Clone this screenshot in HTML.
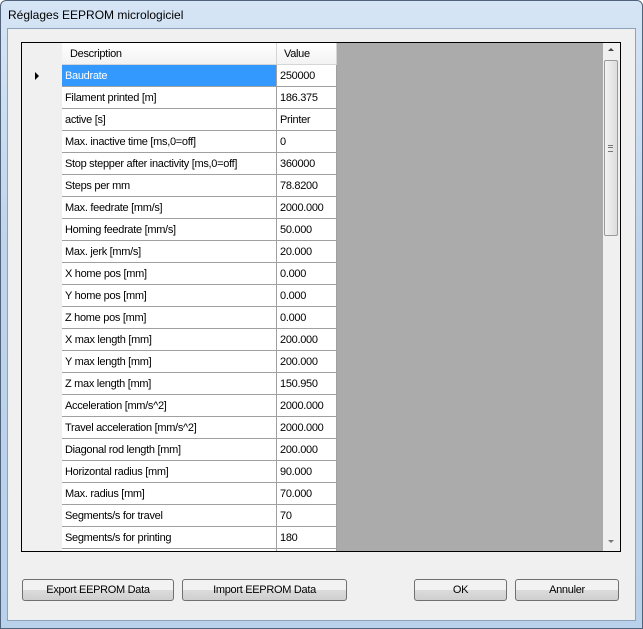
<!DOCTYPE html><html><head><style>
body{margin:0;width:643px;height:629px;overflow:hidden;font-family:"Liberation Sans",sans-serif;font-size:11px;letter-spacing:-0.3px;}
.frame{position:absolute;left:0;top:0;width:641px;height:627px;border:1px solid #50637a;border-radius:6px 6px 0 0;background:linear-gradient(#d6e5f5,#bed4ec 40%,#b9d1eb);}
.title{position:absolute;left:8px;top:8px;font-size:12px;color:#000;letter-spacing:0}
.client{position:absolute;left:7px;top:28px;width:627px;height:591px;background:#f0f0f0;border:1px solid #8da2bb;}
.grid{position:absolute;left:21px;top:42px;width:598px;height:508px;border:1px solid #000;background:#ababab;overflow:hidden}
.rh{position:absolute;left:0;width:40px;height:22px;background:#f0f0f0;border-right:1px solid #d0d0d0;}
.c1{position:absolute;left:40px;height:22px;background:#fff;border-right:1px solid #a0a0a0;border-bottom:1px solid #a0a0a0;line-height:23px;padding-left:3px;box-sizing:border-box;width:215px}
.c2{position:absolute;left:255px;width:60px;height:22px;background:#fff;border-right:1px solid #a0a0a0;border-bottom:1px solid #a0a0a0;line-height:23px;padding-left:3px;box-sizing:border-box}
.sb{position:absolute;left:581px;top:0;width:17px;height:508px;background:#f0f0f0;}
.btn{position:absolute;height:20px;border:1px solid #707070;border-radius:3px;background:linear-gradient(#f2f2f2 50%,#dcdcdc 50%,#cfcfcf);text-align:center;line-height:20px;font-size:11px}
</style></head><body>
<div class="frame"></div>
<div class="title">Réglages EEPROM micrologiciel</div>
<div class="client"></div>
<div class="grid">
<div style="position:absolute;left:0;top:0;width:40px;height:22px;background:#f0f0f0;border-right:1px solid #d0d0d0"></div>
<div style="position:absolute;left:40px;top:0;width:215px;height:22px;background:linear-gradient(#fff,#f3f3f3);border-right:1px solid #d5d5d5;border-bottom:1px solid #d5d5d5;line-height:22px;padding-left:8px;box-sizing:border-box">Description</div>
<div style="position:absolute;left:255px;top:0;width:60px;height:22px;background:linear-gradient(#fff,#f3f3f3);border-right:1px solid #d5d5d5;border-bottom:1px solid #d5d5d5;line-height:22px;padding-left:7px;box-sizing:border-box">Value</div>
<div id="rows"></div>
<div class="sb">
<div style="position:absolute;left:5px;top:5px;border:3px solid transparent;border-bottom:3px solid #444;border-top:0"></div>
<div style="position:absolute;left:1px;top:17px;width:14px;height:176px;border:1px solid #9a9a9a;border-radius:2px;background:linear-gradient(90deg,#f4f4f4,#dcdcdc);box-sizing:border-box"></div>
<div style="position:absolute;left:5px;top:102px;width:5px;height:5px;border-top:1px solid #777;border-bottom:1px solid #777"></div>
<div style="position:absolute;left:5px;top:104px;width:5px;height:1px;background:#777"></div>
<div style="position:absolute;left:5px;top:497px;border:3px solid transparent;border-top:3px solid #777;border-bottom:0"></div>
</div>
</div>
<div class="btn" style="left:22px;top:579px;width:150px">Export EEPROM Data</div>
<div class="btn" style="left:182px;top:579px;width:163px">Import EEPROM Data</div>
<div class="btn" style="left:414px;top:579px;width:91px">OK</div>
<div class="btn" style="left:515px;top:579px;width:102px">Annuler</div>
<script>
var d=[["Baudrate","250000"],["Filament printed [m]","186.375"],["active [s]","Printer"],["Max. inactive time [ms,0=off]","0"],["Stop stepper after inactivity [ms,0=off]","360000"],["Steps per mm","78.8200"],["Max. feedrate [mm/s]","2000.000"],["Homing feedrate [mm/s]","50.000"],["Max. jerk [mm/s]","20.000"],["X home pos [mm]","0.000"],["Y home pos [mm]","0.000"],["Z home pos [mm]","0.000"],["X max length [mm]","200.000"],["Y max length [mm]","200.000"],["Z max length [mm]","150.950"],["Acceleration [mm/s^2]","2000.000"],["Travel acceleration [mm/s^2]","2000.000"],["Diagonal rod length [mm]","200.000"],["Horizontal radius [mm]","90.000"],["Max. radius [mm]","70.000"],["Segments/s for travel","70"],["Segments/s for printing","180"],["",""]];
var h="";d.forEach(function(r,i){var t=22+i*22;
h+='<div class="rh" style="top:'+t+'px"></div>';
h+='<div class="c1" style="top:'+t+'px;'+(i==0?'background:#3399ff;color:#fff;':'')+'">'+r[0]+'</div>';
h+='<div class="c2" style="top:'+t+'px">'+r[1]+'</div>';});
h+='<div style="position:absolute;left:13px;top:29px;border:4px solid transparent;border-left:4px solid #000;border-right:0"></div>';
document.getElementById("rows").innerHTML=h;
</script>
</body></html>
